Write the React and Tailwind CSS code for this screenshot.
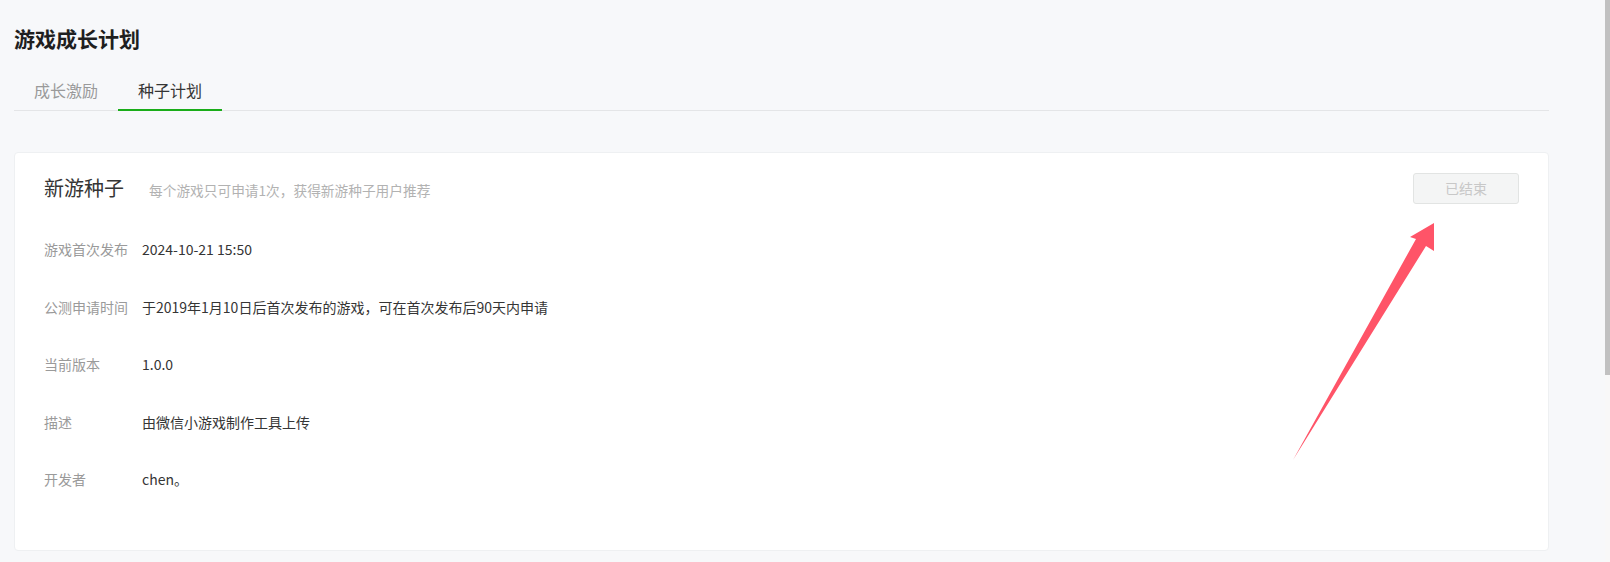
import React from 'react';

const rows = [
  { label: '游戏首次发布', value: '2024-10-21 15:50' },
  { label: '公测申请时间', value: '于2019年1月10日后首次发布的游戏，可在首次发布后90天内申请' },
  { label: '当前版本', value: '1.0.0' },
  { label: '描述', value: '由微信小游戏制作工具上传' },
  { label: '开发者', value: 'chen。' },
];

const App = () => {
  return (
    <div
      className="relative h-[562px] w-[1610px] overflow-hidden bg-[#f7f8fa] pl-[14px] pr-[61px]"
      style={{ fontFamily: '"Noto Sans CJK SC", "Noto Sans", sans-serif' }}
    >
      {/* Page title */}
      <h1 className="pt-[26px] text-[21px] font-bold leading-[24px] text-[#1f1f1f]">
        游戏成长计划
      </h1>

      {/* Tabs */}
      <div className="mt-[22px] flex border-b border-[#e4e5e7]">
        <div className="px-[20px] text-[16px] leading-[36px] text-[#9a9a9a] border-b-2 border-transparent">
          成长激励
        </div>
        <div className="px-[20px] text-[16px] leading-[36px] text-[#353535] border-b-2 border-[#1aad19] -mb-px">
          种子计划
        </div>
      </div>

      {/* Card */}
      <div className="mt-[41px] rounded-[4px] border border-[#eef0f2] bg-white px-[29px] pt-[20px] pb-[61px]">
        <div className="flex h-[31px] items-center justify-between">
          <div className="flex items-baseline">
            <span className="text-[20px] leading-[24px] text-[#353535]">新游种子</span>
            <span className="ml-[25px] text-[13.7px] text-[#b2b2b2]">
              每个游戏只可申请1次，获得新游种子用户推荐
            </span>
          </div>
          <button className="h-[31px] w-[106px] rounded-[3px] border border-[#e2e4e3] bg-[#f4f5f5] text-[14px] text-[#c8c8c8]">
            已结束
          </button>
        </div>

        <div className="mt-[35px] space-y-[37.5px]">
          {rows.map((row) => (
            <div key={row.label} className="flex text-[14px] leading-[20px]">
              <div className="w-[98px] shrink-0 text-[#9a9a9a]">{row.label}</div>
              <div className="text-[#353535]">{row.value}</div>
            </div>
          ))}
        </div>
      </div>

      {/* Annotation arrow */}
      <svg
        className="pointer-events-none absolute left-0 top-0"
        width="1610"
        height="562"
        viewBox="0 0 1610 562"
      >
        <polygon
          points="1434,223 1434,251 1426,246 1293,460 1416,239 1410,237"
          fill="#ff5468"
        />
      </svg>

      {/* Scrollbar */}
      <div className="absolute right-0 top-0 h-[562px] w-[5px] bg-[#f8f8f8]">
        <div className="h-[375px] w-[5px] bg-[#c1c1c1]" />
      </div>
    </div>
  );
};

export default App;
